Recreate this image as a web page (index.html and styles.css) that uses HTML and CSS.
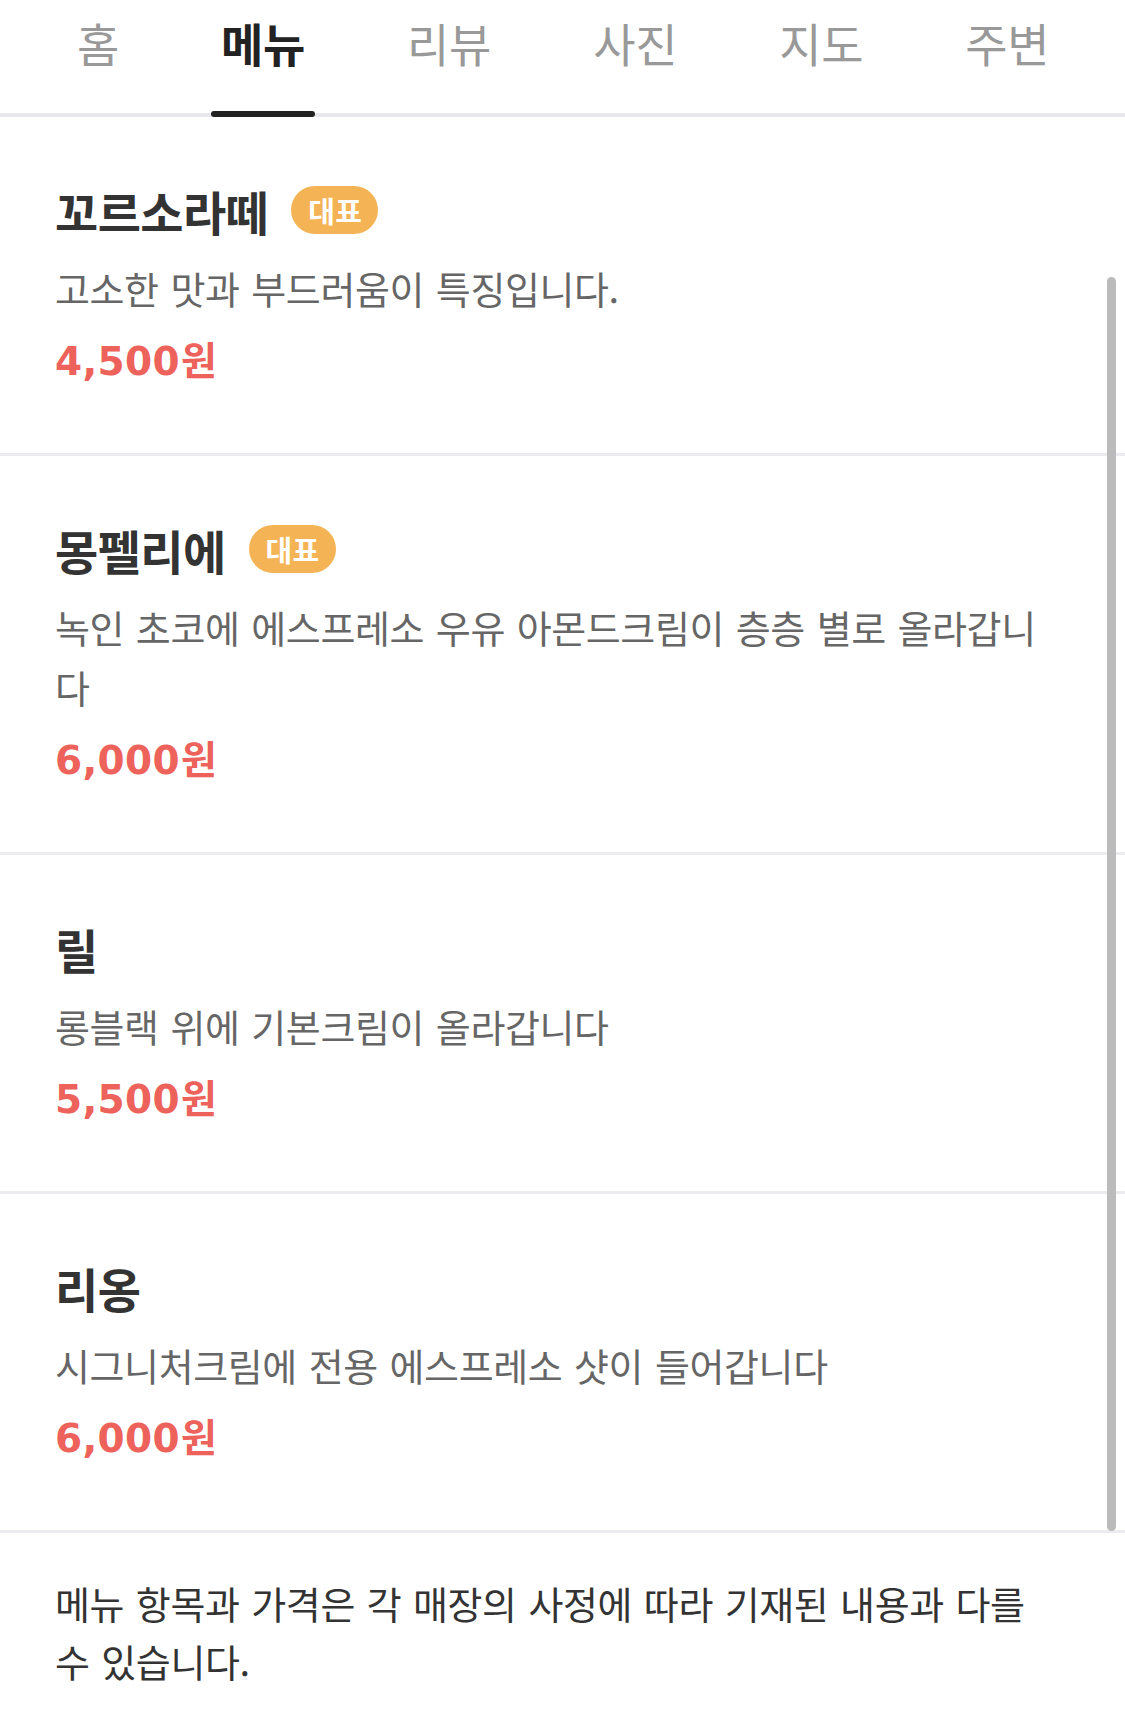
FILE: index.html
```html
<!DOCTYPE html>
<html lang="ko">
<head>
    <meta charset="UTF-8">
    <meta name="viewport" content="width=device-width, initial-scale=1.0">
    <title>메뉴</title>
    <link rel="stylesheet" href="styles.css">
</head>
<body>
    <nav class="tabs">
        <a class="tab">홈</a>
        <a class="tab active">메뉴</a>
        <a class="tab">리뷰</a>
        <a class="tab">사진</a>
        <a class="tab">지도</a>
        <a class="tab">주변</a>
    </nav>

    <div class="menu-list">
        <div class="menu-item">
            <div class="menu-title">
                <span class="menu-name">꼬르소라떼</span>
                <span class="badge">대표</span>
            </div>
            <p class="menu-desc">고소한 맛과 부드러움이 특징입니다.</p>
            <p class="menu-price">4,500<span class="won">원</span></p>
        </div>

        <div class="menu-item">
            <div class="menu-title">
                <span class="menu-name">몽펠리에</span>
                <span class="badge">대표</span>
            </div>
            <p class="menu-desc">녹인 초코에 에스프레소 우유 아몬드크림이 층층 별로 올라갑니다</p>
            <p class="menu-price">6,000<span class="won">원</span></p>
        </div>

        <div class="menu-item">
            <div class="menu-title">
                <span class="menu-name">릴</span>
            </div>
            <p class="menu-desc">롱블랙 위에 기본크림이 올라갑니다</p>
            <p class="menu-price">5,500<span class="won">원</span></p>
        </div>

        <div class="menu-item">
            <div class="menu-title">
                <span class="menu-name">리옹</span>
            </div>
            <p class="menu-desc">시그니처크림에 전용 에스프레소 샷이 들어갑니다</p>
            <p class="menu-price">6,000<span class="won">원</span></p>
        </div>

        <div class="scrollbar"></div>
    </div>

    <p class="notice">메뉴 항목과 가격은 각 매장의 사정에 따라 기재된 내용과 다를 수 있습니다.</p>
</body>
</html>
```

FILE: styles.css
```css
body {
    margin: 0;
    font-family: "Noto Sans CJK KR", sans-serif;
    background: #fff;
    color: #333;
}

/* 상단 탭 */
.tabs {
    display: flex;
    gap: 82px;
    height: 113px;
    padding-left: 67px;
    border-bottom: 4px solid #e8e8ec;
}
.tab {
    position: relative;
    padding: 0 10px;
    font-size: 46px;
    line-height: 85px;
    letter-spacing: -0.3px;
    color: #999;
}
.tab.active {
    color: #222;
    font-weight: 700;
}
.tab.active::after {
    content: "";
    position: absolute;
    left: 0;
    right: 0;
    bottom: -4px;
    height: 6px;
    border-radius: 3px;
    background: #222;
}

/* 메뉴 목록 */
.menu-list {
    position: relative;
}
.menu-item {
    padding: 65px 75px 66px 55px;
    border-bottom: 3px solid #ececf0;
}
.menu-title {
    display: flex;
    align-items: center;
    height: 56px;
}
.menu-name {
    font-size: 47px;
    font-weight: 700;
    letter-spacing: -0.6px;
    color: #333;
}
.badge {
    margin-left: 23px;
    padding: 0 16px 0 17px;
    height: 48px;
    line-height: 48px;
    border-radius: 24px;
    background: #f4b456;
    color: #fff;
    font-size: 29px;
    font-weight: 700;
    letter-spacing: 0.3px;
}
.menu-desc {
    margin: 20px 0 0;
    font-size: 38px;
    line-height: 60px;
    letter-spacing: -0.4px;
    word-spacing: 1.5px;
    color: #666;
}
.menu-price {
    margin: 19px 0 0;
    font-family: "DejaVu Sans", "Noto Sans CJK KR", sans-serif;
    font-size: 39px;
    line-height: 50px;
    font-weight: 700;
    letter-spacing: 0.3px;
    color: #ed625b;
}
.won {
    font-family: "Noto Sans CJK KR", sans-serif;
    margin-left: 1px;
    line-height: 0;
}

.scrollbar {
    position: absolute;
    top: 160px;
    right: 9px;
    bottom: 2px;
    width: 9px;
    border-radius: 5px;
    background: #bbb;
}

.notice {
    margin: 0;
    padding: 41px 75px 0 55px;
    font-size: 38px;
    line-height: 58px;
    letter-spacing: -0.4px;
    word-spacing: 1.5px;
    color: #333;
}
```
